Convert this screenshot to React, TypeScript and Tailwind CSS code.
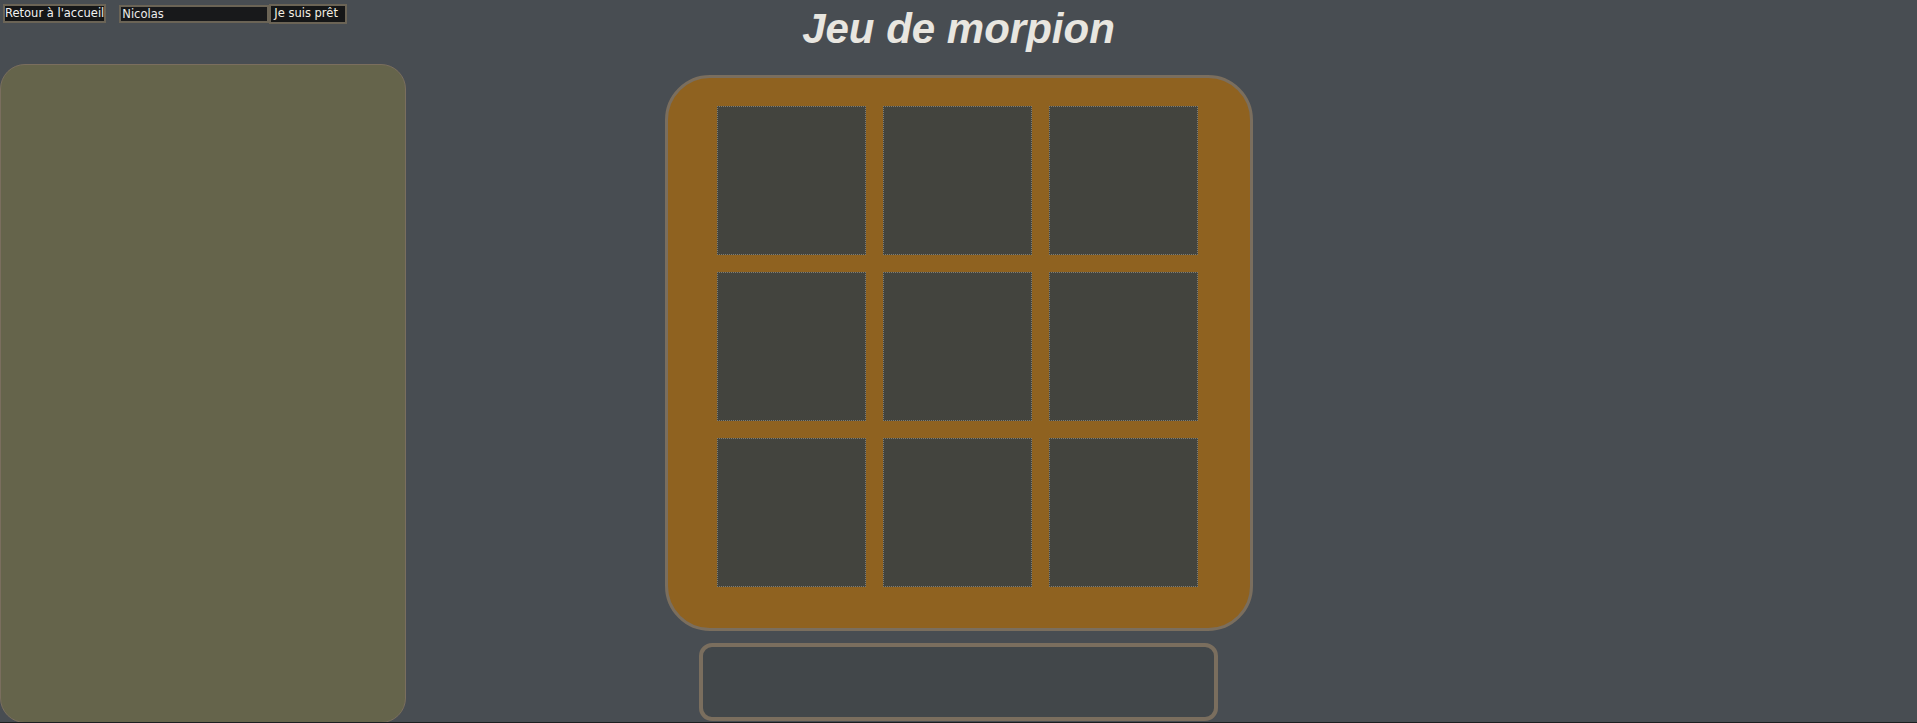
import React from "react";

export default function App() {
  const cells = Array.from({ length: 9 });
  return (
    <div className="box-border h-[723px] w-full overflow-hidden border-b border-[#1c1e20] bg-[#484d52]">
      <div className="grid h-[64px] grid-cols-[1fr_auto_1fr]">
        <div className="flex items-start pl-[3px] pt-[4px] font-['DejaVu_Sans',sans-serif] text-[11.5px]">
          <button className="box-border flex h-[19px] items-center whitespace-nowrap border-2 border-[#6b6456] bg-[#151617] px-0 leading-none text-[#f2f2f2]">
            Retour à l'accueil
          </button>
          <input
            readOnly
            value="Nicolas"
            className="ml-[13px] mt-[1px] box-border h-[18px] w-[150px] border-2 border-[#6b6456] bg-[#18191b] px-[1px] text-[11.5px] leading-none text-[#ececec] outline-none"
          />
          <button className="box-border flex h-[20px] w-[78px] items-center whitespace-nowrap border-2 border-[#6b6456] bg-[#151617] pl-[3px] leading-none text-[#f3eee2]">
            Je suis prêt
          </button>
        </div>
        <h1 className="pt-[5px] font-['Liberation_Sans',Arial,sans-serif] text-[42px] font-bold italic leading-[48px] text-[#e8e6e0]">
          Jeu de morpion
        </h1>
        <div />
      </div>
      <div className="grid grid-cols-[1fr_auto_1fr] items-start">
        <div>
          <div className="box-border h-[659px] w-[406px] rounded-[25px] border border-[#7a6e5e] bg-[#65644b]" />
        </div>
        <div className="flex flex-col items-center pt-[11px]">
          <div className="box-border h-[556px] w-[588px] rounded-[45px] border-[3px] border-[#7a6e5e] bg-[#8f6220] pl-[49px] pt-[28px]">
            <div className="grid grid-cols-[149px_149px_149px] grid-rows-[149px_149px_149px] gap-[17px]">
              {cells.map((_, i) => (
                <div
                  key={i}
                  className="box-border border border-dotted border-[#7f7d72] bg-[#43443e]"
                />
              ))}
            </div>
          </div>
          <div className="mt-[12px] box-border h-[78px] w-[519px] rounded-[13px] border-4 border-[#7a6e5e] bg-[#42474a]" />
        </div>
        <div />
      </div>
    </div>
  );
}
